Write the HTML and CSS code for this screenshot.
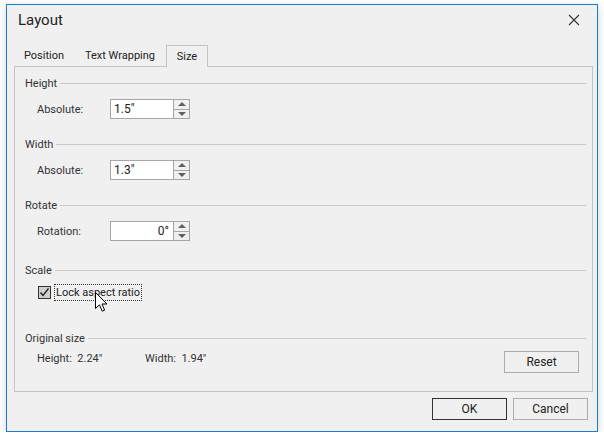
FILE: index.html
```html
<!DOCTYPE html>
<html lang="en">
<head>
    <meta charset="UTF-8">
    <title>Layout</title>
    <link rel="stylesheet" href="styles.css">
</head>
<body>
    <div class="window">
        <div class="titlebar">
            <span class="title">Layout</span>
            <svg class="close" width="12" height="12" viewBox="0 0 12 12">
                <path d="M1 1 L11 11 M11 1 L1 11" stroke="#333" stroke-width="1.1" fill="none"/>
            </svg>
        </div>

        <div class="tabs">
            <div class="tab tab-position">Position</div>
            <div class="tab tab-wrap">Text Wrapping</div>
            <div class="tab tab-size active">Size</div>
        </div>

        <div class="panel">
            <div class="group g-height">
                <div class="group-title"><span>Height</span></div>
                <div class="row">
                    <label>Absolute:</label>
                    <div class="spin">
                        <div class="spin-value">1.5"</div>
                        <div class="spin-btns">
                            <div class="up"></div>
                            <div class="down"></div>
                        </div>
                    </div>
                </div>
            </div>

            <div class="group g-width">
                <div class="group-title"><span>Width</span></div>
                <div class="row">
                    <label>Absolute:</label>
                    <div class="spin">
                        <div class="spin-value">1.3"</div>
                        <div class="spin-btns">
                            <div class="up"></div>
                            <div class="down"></div>
                        </div>
                    </div>
                </div>
            </div>

            <div class="group g-rotate">
                <div class="group-title"><span>Rotate</span></div>
                <div class="row">
                    <label>Rotation:</label>
                    <div class="spin">
                        <div class="spin-value right">0°</div>
                        <div class="spin-btns">
                            <div class="up"></div>
                            <div class="down"></div>
                        </div>
                    </div>
                </div>
            </div>

            <div class="group g-scale">
                <div class="group-title"><span>Scale</span></div>
                <div class="row check-row">
                    <div class="checkbox">
                        <svg width="11" height="11" viewBox="0 0 11 11">
                            <path d="M1.5 5.5 L4 8.5 L9.5 1.5" stroke="#222" stroke-width="1.4" fill="none"/>
                        </svg>
                    </div>
                    <span class="check-label">Lock aspect ratio</span>
                    <svg class="cursor" width="13" height="21" viewBox="0 0 13 21">
                        <path d="M0.5 0.5 L0.5 16.5 L4.5 12.8 L7.2 19.2 L9.6 18.2 L7 12 L12 12 Z" fill="#fff" stroke="#000" stroke-width="1"/>
                    </svg>
                </div>
            </div>

            <div class="group g-original">
                <div class="group-title"><span>Original size</span></div>
                <div class="row orig-row">
                    <span class="orig">Height:&nbsp; 2.24"</span>
                    <span class="orig">Width:&nbsp; 1.94"</span>
                </div>
                <div class="reset-row">
                    <button class="btn">Reset</button>
                </div>
            </div>
        </div>

        <div class="footer">
            <button class="btn default">OK</button>
            <button class="btn">Cancel</button>
        </div>
    </div>
</body>
</html>
```

FILE: styles.css
```css
body {
    margin: 0;
    padding: 0;
    background-color: #fff;
    font-family: Roboto, "Noto Sans", sans-serif;
    font-size: 11px;
    color: #333;
}

.window {
    width: 590px;
    height: 426px;
    margin: 4px 0 0 6px;
    border: 1px solid #1c7ccf;
    background-color: #f0f0f0;
    box-shadow: 0 2px 8px rgba(0, 0, 0, 0.18);
}

.titlebar {
    height: 39px;
    display: flex;
    align-items: center;
    padding: 0 17px 0 11px;
    justify-content: space-between;
}

.title {
    font-size: 15px;
    color: #222;
    margin-top: -10px;
}

.close {
    margin-top: -10px;
}

.tabs {
    display: flex;
    margin-left: 7px;
    height: 21px;
    margin-top: 1px;
}

.tab {
    line-height: 21px;
    text-align: center;
    color: #222;
}

.tab-position { width: 60px; }
.tab-wrap { width: 92px; }
.tab-size { width: 40px; }

.tab.active {
    border: 1px solid #c4c4c4;
    border-bottom: none;
    height: 21px;
    position: relative;
    background-color: #f0f0f0;
    z-index: 1;
}

.panel {
    height: 324px;
    margin-left: 7px;
    border: 1px solid #c4c4c4;
    padding: 0 6px 0 10px;
    width: 561px;
}

.group-title {
    display: flex;
    align-items: center;
    height: 16px;
    color: #333;
}

.group-title::after {
    content: "";
    flex: 1;
    height: 1px;
    background-color: #c8c8c8;
    margin-left: 3px;
}

.g-height { padding-top: 8px; }
.g-width { padding-top: 17px; }
.g-rotate { padding-top: 17px; }
.g-scale { padding-top: 21px; }
.g-original { padding-top: 29px; }

.row {
    display: flex;
    align-items: center;
    margin-top: 8px;
    padding-left: 12px;
}

.row label {
    width: 73px;
    color: #333;
}

.spin {
    display: flex;
    height: 20px;
}

.spin-value {
    width: 56px;
    height: 18px;
    line-height: 18px;
    border: 1px solid #a6a6a6;
    background-color: #fff;
    padding: 0 3px;
    color: #222;
    font-size: 12px;
}

.spin-value.right {
    text-align: right;
    padding-right: 4px;
    width: 55px;
}

.spin-btns {
    width: 15px;
    border: 1px solid #a6a6a6;
    border-left: none;
    display: flex;
    flex-direction: column;
}

.spin-btns .up,
.spin-btns .down {
    flex: 1;
    display: flex;
    align-items: center;
    justify-content: center;
}

.spin-btns .up {
    border-bottom: 1px solid #a6a6a6;
}

.spin-btns .up::before {
    content: "";
    border-left: 4px solid transparent;
    border-right: 4px solid transparent;
    border-bottom: 4px solid #606060;
}

.spin-btns .down::before {
    content: "";
    border-left: 4px solid transparent;
    border-right: 4px solid transparent;
    border-top: 4px solid #606060;
}

.check-row {
    position: relative;
    padding-left: 13px;
    margin-top: 5px;
    height: 18px;
}

.checkbox {
    width: 11px;
    height: 11px;
    border: 1px solid #333;
    background-color: #cfcfcf;
    display: flex;
    align-items: center;
    justify-content: center;
}

.check-label {
    margin-left: 3px;
    padding: 0 1px;
    line-height: 15px;
    border: 1px dotted #333;
    color: #222;
}

.cursor {
    position: absolute;
    left: 70px;
    top: 9px;
}

.orig-row {
    margin-top: 6px;
}

.orig {
    width: 108px;
    color: #333;
}

.reset-row {
    display: flex;
    justify-content: flex-end;
    margin-top: -14px;
    padding-right: 7px;
}

.btn {
    width: 75px;
    height: 22px;
    border: 1px solid #adadad;
    background-color: #f0f0f0;
    font-family: inherit;
    font-size: 12px;
    color: #222;
    padding: 0;
}

.btn.default {
    border-color: #333;
}

.footer {
    display: flex;
    justify-content: flex-end;
    gap: 6px;
    padding: 6px 9px 0 0;
}
```
